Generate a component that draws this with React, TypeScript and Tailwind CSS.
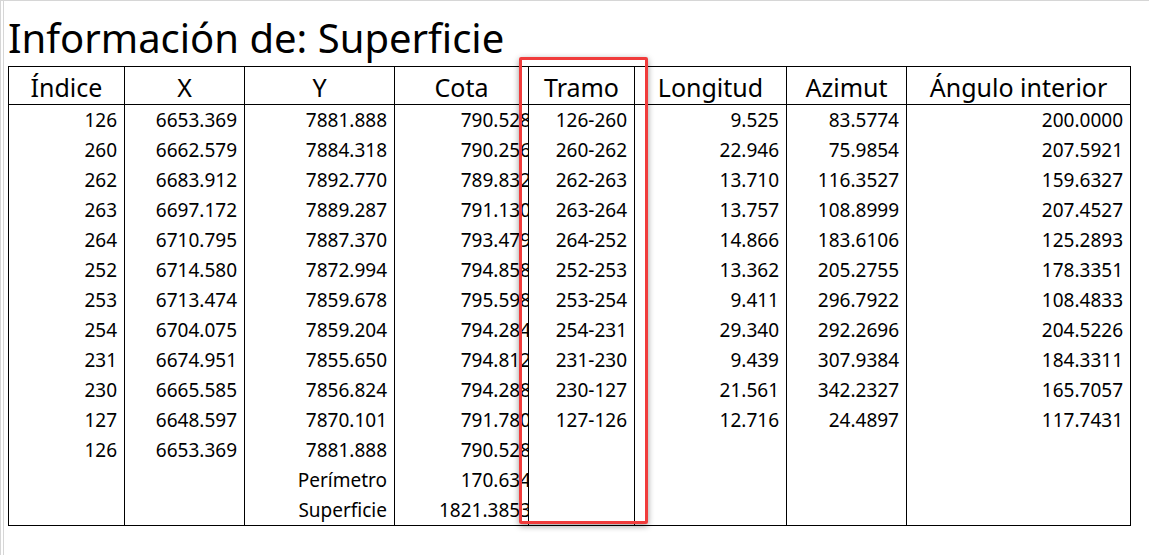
// Información de superficie: tabla de vértices y tramos
const font = { fontFamily: '"Noto Sans", "Open Sans", Arial, sans-serif' }

const columns = [
  { title: 'Índice', width: 'w-[116px]' },
  { title: 'X', width: 'w-[120px]' },
  { title: 'Y', width: 'w-[150px]' },
  { title: 'Cota', width: 'w-[134px]' },
  { title: 'Tramo', width: 'w-[106px]' },
  { title: 'Longitud', width: 'w-[152px]' },
  { title: 'Azimut', width: 'w-[120px]' },
  { title: 'Ángulo interior', width: 'w-[224px]' },
]

type Row = [string, string, string, string, string, string, string, string]

const rows: Row[] = [
  ['126', '6653.369', '7881.888', '790.528', '126-260', '9.525', '83.5774', '200.0000'],
  ['260', '6662.579', '7884.318', '790.256', '260-262', '22.946', '75.9854', '207.5921'],
  ['262', '6683.912', '7892.770', '789.832', '262-263', '13.710', '116.3527', '159.6327'],
  ['263', '6697.172', '7889.287', '791.130', '263-264', '13.757', '108.8999', '207.4527'],
  ['264', '6710.795', '7887.370', '793.479', '264-252', '14.866', '183.6106', '125.2893'],
  ['252', '6714.580', '7872.994', '794.858', '252-253', '13.362', '205.2755', '178.3351'],
  ['253', '6713.474', '7859.678', '795.598', '253-254', '9.411', '296.7922', '108.4833'],
  ['254', '6704.075', '7859.204', '794.284', '254-231', '29.340', '292.2696', '204.5226'],
  ['231', '6674.951', '7855.650', '794.812', '231-230', '9.439', '307.9384', '184.3311'],
  ['230', '6665.585', '7856.824', '794.288', '230-127', '21.561', '342.2327', '165.7057'],
  ['127', '6648.597', '7870.101', '791.780', '127-126', '12.716', '24.4897', '117.7431'],
  ['126', '6653.369', '7881.888', '790.528', '', '', '', ''],
  ['', '', 'Perímetro', '170.634', '', '', '', ''],
  ['', '', 'Superficie', '1821.3853', '', '', '', ''],
]

export default function App() {
  return (
    <div className="h-[555px] w-full bg-white border-t border-l border-[#d6d6d6] text-black" style={font}>
      <div className="ml-[2px] h-full border-l border-[#d6d6d6] pl-[4px]">
        <h1 className="pt-[16px] text-[40px] leading-[41px] font-normal whitespace-nowrap">
          Información de: Superficie
        </h1>

        <div className="relative mt-[8px] w-[1122px]">
          <table className="table-fixed border-collapse border border-black w-[1122px]">
            <thead>
              <tr className="h-[38px] border-b border-black">
                {columns.map((c) => (
                  <th
                    key={c.title}
                    className={`${c.width} border-x border-black px-1 pt-[2px] text-[25px] leading-[30px] font-normal text-center whitespace-nowrap`}
                  >
                    {c.title}
                  </th>
                ))}
              </tr>
            </thead>
            <tbody>
              {rows.map((r, i) => (
                <tr key={i} className="h-[30px]">
                  {r.map((v, j) => (
                    <td
                      key={j}
                      className={`border-x border-black text-right text-[19px] leading-[30px] whitespace-nowrap overflow-hidden ${
                        j === 3 ? 'pr-0' : 'pr-[7px]'
                      }`}
                    >
                      {j === 3 ? <span className="inline-block mr-[-3px]">{v}</span> : v}
                    </td>
                  ))}
                </tr>
              ))}
            </tbody>
          </table>

          {/* resaltado de la columna Tramo */}
          <div className="absolute left-[511px] top-[-9px] w-[129px] h-[467px] border-[3px] border-[#f03c3c] rounded-[2px] shadow-[0_2px_6px_rgba(0,0,0,0.4)] pointer-events-none" />
        </div>
      </div>
    </div>
  )
}
